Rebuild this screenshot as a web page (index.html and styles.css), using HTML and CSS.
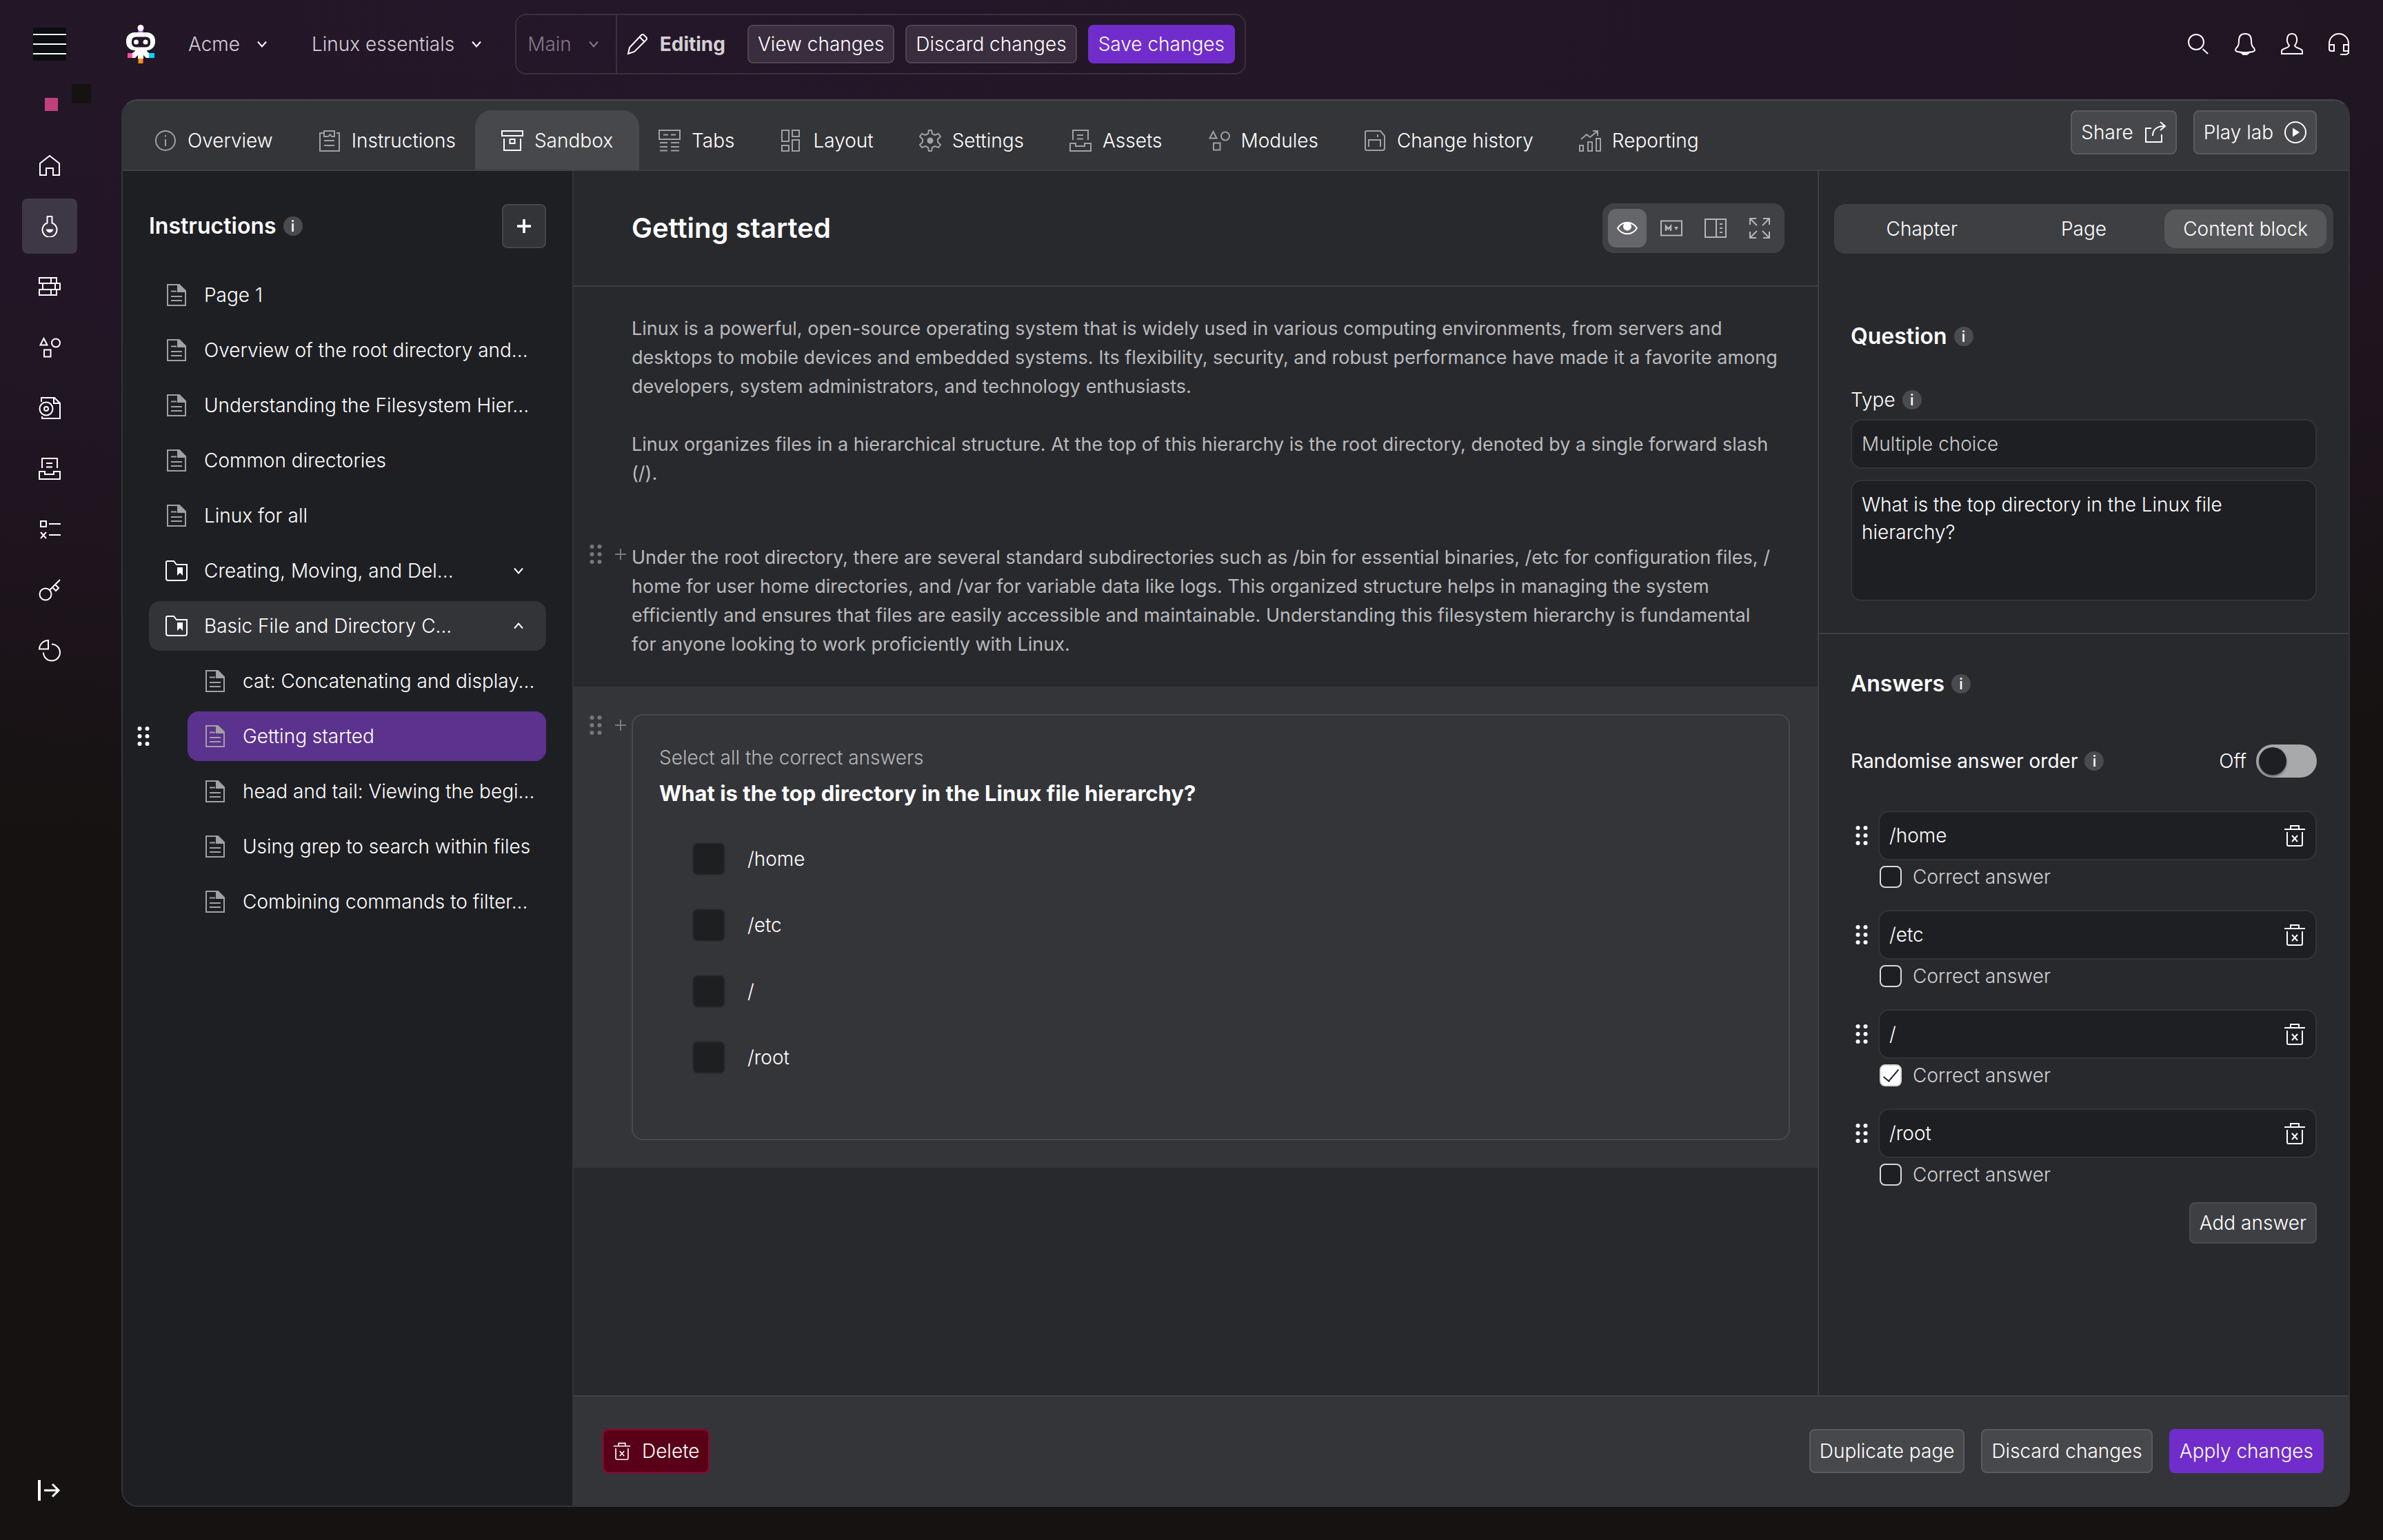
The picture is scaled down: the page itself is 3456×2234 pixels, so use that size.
FILE: index.html
```
<!DOCTYPE html>
<html lang="en">
<head>
<meta charset="utf-8">
<title>Linux essentials – Getting started</title>
<link rel="stylesheet" href="styles.css">
</head>
<body>
<svg class="sprite" aria-hidden="true">
  <symbol id="chevron" viewBox="0 0 16 16"><path d="M2 4.500l6 7 6-7"/></symbol>
  <symbol id="chevron-up" viewBox="0 0 16 16"><path d="M2 11.500l6-7 6 7"/></symbol>
  <symbol id="dots" viewBox="0 0 20 32"><g fill="currentColor" stroke="none"><circle cx="4.500" cy="5" r="3"/><circle cx="15.500" cy="5" r="3"/><circle cx="4.500" cy="16" r="3"/><circle cx="15.500" cy="16" r="3"/><circle cx="4.500" cy="27" r="3"/><circle cx="15.500" cy="27" r="3"/></g></symbol>
  <symbol id="plus" viewBox="0 0 16 16"><path d="M8 0v16M0 8h16"/></symbol>
  <symbol id="home" viewBox="0 0 32 32"><path d="M2 30V13L16 2l14 11v17h-9V20H11v10z"/></symbol>
  <symbol id="flask" viewBox="0 0 32 32"><path d="M12 2h8M12.500 2v9.500a10.500 10.500 0 1 0 7 0V2"/><path d="M11 20.500h10a5 5 0 0 1-10 0z" fill="currentColor" stroke="none"/></symbol>
  <symbol id="bricks" viewBox="0 0 32 32"><path d="M1 3h25v8H1zM18 3v8M6 11h25v9H6zM24 11v9M1 20h25v8H1zM18 20v8"/></symbol>
  <symbol id="shapes" viewBox="0 0 32 32"><path d="M7.500 3L2.500 12.500h10zM8 19.500h9.500v10H8z"/><circle cx="25" cy="9.500" r="6"/></symbol>
  <symbol id="disc-page" viewBox="0 0 32 32"><path d="M4 7V1h19l8 8v22H5v-3M22 1v8h8"/><circle cx="11" cy="17" r="9.500"/><circle cx="11" cy="17" r="3"/></symbol>
  <symbol id="tray" viewBox="0 0 32 32"><path d="M5 15V1h22v14M11 8h9M11 13.500h9M1 20h8v4h13v-4h9v11H1z"/></symbol>
  <symbol id="checklist" viewBox="0 0 32 32"><path d="M3 4h8v8H3zM15 8h17M15 24h17M3 20l8 9M11 20l-8 9"/></symbol>
  <symbol id="key" viewBox="0 0 32 32"><circle cx="10" cy="22" r="8.500"/><path d="M16 16L31 1M24 8l5 5-4 4-5-5"/></symbol>
  <symbol id="pie" viewBox="0 0 32 32"><path d="M14 1v12.500H1A13 13 0 0 1 14 1zM19 6.500a12 12 0 1 1-12 12"/></symbol>
  <symbol id="exit" viewBox="0 0 36 36"><path d="M3 3v30" stroke-width="4"/><path d="M10 18h21M22 9l9 9-9 9" stroke-width="3"/></symbol>
  <symbol id="pencil" viewBox="0 0 32 32"><path d="M2 30l2-9L21 3q2-2 4 0l3 3q2 2 0 4L11 27zM19 6l7 7"/></symbol>
  <symbol id="search" viewBox="0 0 32 32"><circle cx="13" cy="13" r="11"/><path d="M22.500 23l7.500 7"/></symbol>
  <symbol id="bell" viewBox="0 0 32 32"><path d="M16 1C9 1 7 6 7 11c0 6-1 8-4 11-2 3-1 4 2 5 7 1.500 15 1.500 22 0 3-1 4-2 2-5-3-3-4-5-4-11 0-5-2-10-9-10z"/><path d="M11 29h10l-3 2.500h-4z" fill="currentColor"/></symbol>
  <symbol id="user" viewBox="0 0 32 32"><path d="M12 18C7 12 8 1 16 1s9 11 4 17c0 4 11 4 11 8v4H1v-4c0-4 11-4 11-8z"/></symbol>
  <symbol id="headset" viewBox="0 0 32 32"><path d="M2 24V15a14 14 0 0 1 28 0v14l-3 2h-9M2 17h7v9H5q-3 0-3-3M30 17h-7v9h7"/></symbol>
  <symbol id="info" viewBox="0 0 32 32"><circle cx="16" cy="16" r="14"/><path d="M16 14v10M16 8v2.500"/></symbol>
  <symbol id="clipboard" viewBox="0 0 32 32"><path d="M7 5H2v26h28V5h-4M8 2h15v8h-4l-2-3-3 3H8zM8 16h15M8 23h15"/></symbol>
  <symbol id="archive" viewBox="0 0 32 32"><path d="M1 2h30v7H1zM4 13v17h24V13M12.500 14h7v6h-7z"/></symbol>
  <symbol id="tabs" viewBox="0 0 32 32"><path d="M1 1h30v13H1zM7 7.500h7M18 7.500h7M2 19h11M18 19h12M2 25h11M18 25h12M2 30.500h11M18 30.500h12"/></symbol>
  <symbol id="layout" viewBox="0 0 32 32"><path d="M3 1h10v16H3zM18 1h10v9H18zM3 23h10v8H3zM18 15h10v16H18z"/></symbol>
  <symbol id="gear" viewBox="0 0 32 32"><path d="M13 6l1-5h4l1 5 4 2 5-2 3 4-4 4v4l4 4-3 4-5-2-4 2-1 5h-4l-1-5-4-2-5 2-3-4 4-4v-4l-4-4 3-4 5 2z"/><circle cx="16" cy="16" r="3.500" fill="currentColor"/></symbol>
  <symbol id="floppy" viewBox="0 0 32 32"><path d="M4 2h20l6 7v18q0 3-3 3H4q-2 0-2-2V4q0-2 2-2zM7 25V15h17v10M20 7v4"/></symbol>
  <symbol id="chart" viewBox="0 0 32 32"><path d="M1 23h5v8H1zM13 18h6v13h-6zM25 13h6v18h-6zM3 14l8-7 5 4 11-9M20 2h7v7"/></symbol>
  <symbol id="share" viewBox="0 0 32 32"><path d="M10 10H2v20h23V19M12 21c0-8 5-14 17-14M23 1l7 6-7 6"/></symbol>
  <symbol id="play" viewBox="0 0 32 32"><circle cx="16" cy="16" r="15"/><path d="M12 9.500l10 6.500-10 6.500z" fill="currentColor" stroke="none"/></symbol>
  <symbol id="page" viewBox="0 0 32 32"><path d="M3 1h17l9 9v21H3zM8 10.500h8M8 18h16M8 24h16"/><path d="M18 1v10h10z" fill="currentColor"/></symbol>
  <symbol id="folder" viewBox="0 0 32 32"><path d="M3 2h9l4 5h15v20q0 3-3 3H4q-3 0-3-3V4q0-2 2-2z"/><path d="M17 11h8v12l-4-4-4 4z" fill="currentColor" stroke="none"/></symbol>
  <symbol id="eye" viewBox="0 0 32 32"><path d="M2 16C9 5 23 5 30 16 23 27 9 27 2 16z"/><circle cx="16" cy="13.500" r="6" fill="currentColor" stroke="none"/></symbol>
  <symbol id="markdown" viewBox="0 0 32 32"><path d="M1 5.500h30v21H1z"/><path d="M8 20v-7l3.500 4 3.500-4v7" stroke-width="2.500"/><path d="M20 14h6l-3 5z" fill="currentColor" stroke="none"/></symbol>
  <symbol id="split" viewBox="0 0 32 32"><path d="M1 3h30v26H1zM17 3v26M22 10h4M22 16h4M22 22h4"/></symbol>
  <symbol id="expand" viewBox="0 0 32 32"><path d="M2 11V2h9M2 2l10 10M21 2h9v9M30 2L20 12M2 21v9h9M2 30l10-10M21 30h9v-9M30 30L20 20"/></symbol>
  <symbol id="trash" viewBox="0 0 32 32"><path d="M1 7h30M10 7V2h12v5M5 11v18q0 2 2 2h18q2 0 2-2V11M12 16l8 9M20 16l-8 9"/></symbol>
</svg>

<div class="app">
  <nav class="rail" aria-label="Main">
    <button class="menu" aria-label="Menu"><span></span><span></span><span></span></button>
    <span class="deco deco-dark"></span><span class="deco deco-pink"></span>
    <div class="rail-links">
      <a href="#" aria-label="Home"><svg class="icon"><use href="#home"/></svg></a>
      <a href="#" aria-label="Labs" class="active"><svg class="icon"><use href="#flask"/></svg></a>
      <a href="#" aria-label="Collections"><svg class="icon"><use href="#bricks"/></svg></a>
      <a href="#" aria-label="Modules"><svg class="icon"><use href="#shapes"/></svg></a>
      <a href="#" aria-label="Images"><svg class="icon"><use href="#disc-page"/></svg></a>
      <a href="#" aria-label="Assets"><svg class="icon"><use href="#tray"/></svg></a>
      <a href="#" aria-label="Checks"><svg class="icon"><use href="#checklist"/></svg></a>
      <a href="#" aria-label="Keys"><svg class="icon"><use href="#key"/></svg></a>
      <a href="#" aria-label="Reports"><svg class="icon"><use href="#pie"/></svg></a>
    </div>
    <button class="rail-exit" aria-label="Expand"><svg><use href="#exit"/></svg></button>
  </nav>

  <header class="topbar">
    <svg class="logo" viewBox="0 0 42 56" aria-label="Home" role="img">
      <rect x="17.500" y="7" width="7" height="6" fill="#b36bff"/>
      <rect x="2" y="41" width="9" height="7" fill="#ff4fa3"/>
      <rect x="32" y="41" width="9" height="7" fill="#00d8ff"/>
      <rect x="17.500" y="48" width="7" height="8" fill="#ff8f1f"/>
      <circle cx="21" cy="4.500" r="4.500" fill="#fff"/>
      <rect y="11" width="42" height="26" rx="12" fill="#fff"/>
      <path d="M12 35h18v3l3 3v7h-4l-4-4v5h-8v-5l-4 4h-4v-7l4-3z" fill="#fff"/>
      <rect x="8" y="17.500" width="27" height="15" rx="6" fill="#231728"/>
      <circle cx="14.500" cy="25" r="3.500" fill="#fff"/><circle cx="28" cy="25" r="3.500" fill="#fff"/>
    </svg>
    <button class="crumb">Acme <svg class="chev"><use href="#chevron"/></svg></button>
    <button class="crumb">Linux essentials <svg class="chev"><use href="#chevron"/></svg></button>
    <div class="branch">
      <button class="crumb branch-name">Main <svg class="chev"><use href="#chevron"/></svg></button>
      <div class="branch-state">
        <svg class="icon"><use href="#pencil"/></svg><strong>Editing</strong>
        <button class="btn btn-small">View changes</button>
        <button class="btn btn-small">Discard changes</button>
        <button class="btn btn-small btn-primary">Save changes</button>
      </div>
    </div>
    <div class="tools">
      <button aria-label="Search"><svg class="icon"><use href="#search"/></svg></button>
      <button aria-label="Notifications"><svg class="icon"><use href="#bell"/></svg></button>
      <button aria-label="Account"><svg class="icon"><use href="#user"/></svg></button>
      <button aria-label="Support"><svg class="icon"><use href="#headset"/></svg></button>
    </div>
  </header>

  <main class="panel">
    <header class="panel-head">
      <nav class="tabs" aria-label="Lab">
        <a href="#"><svg class="icon"><use href="#info"/></svg>Overview</a>
        <a href="#"><svg class="icon"><use href="#clipboard"/></svg>Instructions</a>
        <a href="#" class="active"><svg class="icon"><use href="#archive"/></svg>Sandbox</a>
        <a href="#"><svg class="icon"><use href="#tabs"/></svg>Tabs</a>
        <a href="#"><svg class="icon"><use href="#layout"/></svg>Layout</a>
        <a href="#"><svg class="icon"><use href="#gear"/></svg>Settings</a>
        <a href="#"><svg class="icon"><use href="#tray"/></svg>Assets</a>
        <a href="#"><svg class="icon"><use href="#shapes"/></svg>Modules</a>
        <a href="#"><svg class="icon"><use href="#floppy"/></svg>Change history</a>
        <a href="#"><svg class="icon"><use href="#chart"/></svg>Reporting</a>
      </nav>
      <div class="head-actions">
        <button class="btn">Share <svg class="icon"><use href="#share"/></svg></button>
        <button class="btn">Play lab <svg class="icon"><use href="#play"/></svg></button>
      </div>
    </header>

    <aside class="outline">
      <div class="outline-head">
        <h2 class="heading">Instructions <span class="hint">i</span></h2>
        <button class="btn btn-add" aria-label="Add page"><svg><use href="#plus"/></svg></button>
      </div>
      <ul class="pages">
        <li><a href="#"><svg class="icon"><use href="#page"/></svg>Page 1</a></li>
        <li><a href="#"><svg class="icon"><use href="#page"/></svg>Overview of the root directory and...</a></li>
        <li><a href="#"><svg class="icon"><use href="#page"/></svg>Understanding the Filesystem Hier...</a></li>
        <li><a href="#"><svg class="icon"><use href="#page"/></svg>Common directories</a></li>
        <li><a href="#"><svg class="icon"><use href="#page"/></svg>Linux for all</a></li>
        <li><a href="#" class="folder"><svg class="icon"><use href="#folder"/></svg>Creating, Moving, and Del...<svg class="chev"><use href="#chevron"/></svg></a></li>
        <li><a href="#" class="folder open"><svg class="icon"><use href="#folder"/></svg>Basic File and Directory C...<svg class="chev"><use href="#chevron-up"/></svg></a>
          <ul class="pages nested">
            <li><a href="#"><svg class="icon"><use href="#page"/></svg>cat: Concatenating and display...</a></li>
            <li class="current"><svg class="grip"><use href="#dots"/></svg><a href="#" aria-current="page"><svg class="icon"><use href="#page"/></svg>Getting started</a></li>
            <li><a href="#"><svg class="icon"><use href="#page"/></svg>head and tail: Viewing the begi...</a></li>
            <li><a href="#"><svg class="icon"><use href="#page"/></svg>Using grep to search within files</a></li>
            <li><a href="#"><svg class="icon"><use href="#page"/></svg>Combining commands to filter...</a></li>
          </ul>
        </li>
      </ul>
    </aside>

    <section class="editor">
      <header class="editor-head">
        <h1>Getting started</h1>
        <div class="views">
          <button class="active" aria-label="Preview"><svg class="icon"><use href="#eye"/></svg></button>
          <button aria-label="Markdown"><svg class="icon"><use href="#markdown"/></svg></button>
          <button aria-label="Split view"><svg class="icon"><use href="#split"/></svg></button>
          <button aria-label="Full screen"><svg class="icon"><use href="#expand"/></svg></button>
        </div>
      </header>
      <div class="block">
        <div class="gutter"></div>
        <div class="prose">
          <p>Linux is a powerful, open-source operating system that is widely used in various computing environments, from servers and<br>desktops to mobile devices and embedded systems. Its flexibility, security, and robust performance have made it a favorite among<br>developers, system administrators, and technology enthusiasts.</p>
          <p>Linux organizes files in a hierarchical structure. At the top of this hierarchy is the root directory, denoted by a single forward slash<br>(/).</p>
        </div>
      </div>
      <div class="block">
        <div class="gutter"><svg class="grip"><use href="#dots"/></svg><svg class="add"><use href="#plus"/></svg></div>
        <div class="prose">
          <p>Under the root directory, there are several standard subdirectories such as /bin for essential binaries, /etc for configuration files, /<br>home for user home directories, and /var for variable data like logs. This organized structure helps in managing the system<br>efficiently and ensures that files are easily accessible and maintainable. Understanding this filesystem hierarchy is fundamental<br>for anyone looking to work proficiently with Linux.</p>
        </div>
      </div>
      <div class="block selected">
        <div class="gutter"><svg class="grip"><use href="#dots"/></svg><svg class="add"><use href="#plus"/></svg></div>
        <fieldset class="quiz">
          <p class="quiz-note">Select all the correct answers</p>
          <h3>What is the top directory in the Linux file hierarchy?</h3>
          <div class="options">
            <label><input type="checkbox">/home</label>
            <label><input type="checkbox">/etc</label>
            <label><input type="checkbox">/</label>
            <label><input type="checkbox">/root</label>
          </div>
        </fieldset>
      </div>
    </section>

    <aside class="inspector">
      <div class="segments">
        <button>Chapter</button><button>Page</button><button class="active">Content block</button>
      </div>
      <section class="question">
        <h2 class="heading">Question <span class="hint">i</span></h2>
        <div class="field-label"><label for="type">Type</label> <span class="hint">i</span></div>
        <select id="type" class="field muted"><option>Multiple choice</option></select>
        <textarea class="field" aria-label="Question text">What is the top directory in the Linux file hierarchy?</textarea>
      </section>
      <section class="answers">
        <h2 class="heading">Answers <span class="hint">i</span></h2>
        <div class="random">
          <label for="random">Randomise answer order</label> <span class="hint">i</span>
          <span class="random-state">Off</span><input id="random" type="checkbox" class="switch">
        </div>
        <div class="answer-list">
          <div class="answer"><svg class="grip"><use href="#dots"/></svg>
            <div class="answer-field"><input type="text" value="/home" aria-label="Answer 1"><button aria-label="Remove answer 1"><svg class="icon"><use href="#trash"/></svg></button></div>
            <label class="correct"><input type="checkbox">Correct answer</label></div>
          <div class="answer"><svg class="grip"><use href="#dots"/></svg>
            <div class="answer-field"><input type="text" value="/etc" aria-label="Answer 2"><button aria-label="Remove answer 2"><svg class="icon"><use href="#trash"/></svg></button></div>
            <label class="correct"><input type="checkbox">Correct answer</label></div>
          <div class="answer"><svg class="grip"><use href="#dots"/></svg>
            <div class="answer-field"><input type="text" value="/" aria-label="Answer 3"><button aria-label="Remove answer 3"><svg class="icon"><use href="#trash"/></svg></button></div>
            <label class="correct"><input type="checkbox" checked>Correct answer</label></div>
          <div class="answer"><svg class="grip"><use href="#dots"/></svg>
            <div class="answer-field"><input type="text" value="/root" aria-label="Answer 4"><button aria-label="Remove answer 4"><svg class="icon"><use href="#trash"/></svg></button></div>
            <label class="correct"><input type="checkbox">Correct answer</label></div>
        </div>
        <button class="btn btn-new">Add answer</button>
      </section>
    </aside>

    <footer class="panel-foot">
      <button class="btn btn-danger"><svg><use href="#trash"/></svg>Delete</button>
      <div class="foot-actions">
        <button class="btn">Duplicate page</button>
        <button class="btn">Discard changes</button>
        <button class="btn btn-primary">Apply changes</button>
      </div>
    </footer>
  </main>
</div>
</body>
</html>
```
FILE: styles.css
```
*, *::before, *::after { box-sizing: border-box; }

body {
  margin: 0;
  color: #fff;
  font: 300 28px/40px Inter, "Liberation Sans", sans-serif;
  background: #151211 radial-gradient(ellipse 130% 55% at 30% 0, #241729 0%, #221626 40%, #1c141b 75%, #151211 100%) no-repeat;
}

h1, h2, h3, p, ul, fieldset { margin: 0; padding: 0; }
ul { list-style: none; }
a { color: inherit; text-decoration: none; }
button, input, select, textarea { font: inherit; color: inherit; }
button { padding: 0; border: 0; background: none; white-space: nowrap; }
svg { display: block; flex: none; fill: none; stroke: currentColor; stroke-width: 2; }

.sprite { position: absolute; width: 0; height: 0; }
.icon { width: 32px; height: 32px; }
.chev { width: 16px; height: 16px; }
.grip { width: 20px; height: 32px; }

.app {
  display: grid;
  grid-template-columns: 176px minmax(0, 1fr);
  grid-template-rows: 144px 1fr;
  min-height: 100vh;
  padding: 0 48px 48px 0;
}

/* Left rail */
.rail {
  position: relative;
  grid-row: 1 / 3;
  display: flex;
  flex-direction: column;
  padding: 40px 0 0 32px;
}
.menu {
  display: flex;
  flex-direction: column;
  justify-content: space-between;
  width: 48px;
  height: 48px;
  margin: 0 0 112px 16px;
  padding: 9px 0;
  background: #0b0d10;
}
.menu span { height: 2px; background: #fff; }
.deco { position: absolute; }
.deco-dark { left: 104px; top: 122px; width: 28px; height: 28px; background: #151211; }
.deco-pink { left: 65px; top: 142px; width: 19px; height: 19px; background: #c0407f; }
.rail-links { display: flex; flex-direction: column; gap: 8px; }
.rail-links a {
  display: grid;
  place-items: center;
  width: 80px;
  height: 80px;
  border-radius: 8px;
}
.rail-links .active { background: #3e3846; }
.rail-exit { width: 48px; height: 48px; margin: auto 0 0 16px; padding: 6px; }
.rail-exit svg { width: 36px; height: 36px; }

/* Top bar */
.topbar { display: flex; align-items: center; height: 128px; color: #d3d0d4; }
.logo { width: 42px; height: 56px; margin: 0 48px 0 7px; stroke: none; }
.crumb { display: flex; align-items: center; gap: 24px; margin-right: 64px; }
.crumb svg { color: #fff; }
.branch {
  display: flex;
  align-items: stretch;
  height: 88px;
  margin-left: -16px;
  border: 2px solid #3a2e3f;
  border-radius: 16px;
}
.branch-name {
  margin: 0;
  padding: 0 24px 0 16px;
  border-right: 2px solid #3a2e3f;
  color: #837a86;
}
.branch-name svg { color: inherit; }
.branch-state { display: flex; align-items: center; gap: 16px; padding: 0 14px; color: #fff; }
.branch-state strong { margin-right: 16px; color: #d3d0d4; font-weight: 700; }
.tools { display: flex; gap: 36px; margin-left: auto; color: #fff; }

/* Buttons */
.btn {
  display: inline-flex;
  align-items: center;
  justify-content: center;
  gap: 16px;
  height: 64px;
  padding: 0 13px;
  border: 2px solid #5a5b5e;
  border-radius: 8px;
  background: #47484b;
  color: #fff;
}
.btn-small { height: 56px; border-color: #4e4453; background: #392d3e; }
.btn-primary { border-color: #702dcb; background: #702dcb; }
.btn-danger { border-color: #94002f; background: #590017; }
.btn-danger svg { width: 26px; height: 26px; }

/* Panel */
.panel {
  display: grid;
  grid-template-columns: 654px minmax(0, 1fr) 770px;
  grid-template-rows: 102px 1fr 160px;
  overflow: hidden;
  border: 2px solid #343539;
  border-top-color: #47484b;
  border-radius: 24px;
  background: #28292d;
}
.panel-head {
  grid-column: 1 / -1;
  display: flex;
  justify-content: space-between;
  align-items: flex-start;
  padding: 14px 46px 0 13px;
  border-bottom: 2px solid #404145;
  background: #343539;
}
.tabs { display: flex; }
.tabs a {
  display: flex;
  align-items: center;
  gap: 16px;
  height: 86px;
  padding: 2px 33px 0;
  border-radius: 24px 24px 0 0;
  white-space: nowrap;
}
.tabs .icon { color: #a0a1a3; }
.tabs .active { margin: 0 -5px; padding: 2px 38px 0; background: #47484b; }
.tabs .active .icon { color: #fff; }
.head-actions { display: flex; gap: 24px; }

.heading { display: flex; align-items: center; gap: 10px; font-size: 32px; font-weight: 600; }
.hint {
  display: inline-grid;
  place-items: center;
  width: 28px;
  height: 28px;
  border-radius: 50%;
  background: #4a4b4e;
  font-size: 22px;
  font-weight: 500;
  line-height: 28px;
}

/* Page outline */
.outline { grid-row: 2 / 4; padding: 48px 38px; border-right: 2px solid #333438; background: #1e1f23; }
.outline-head { display: flex; justify-content: space-between; align-items: center; margin-bottom: 32px; }
.btn-add { width: 64px; border-color: #45464a; background: #333438; }
.btn-add svg { width: 20px; height: 20px; stroke-width: 3; stroke-linecap: round; overflow: visible; }
.pages { display: grid; grid-template-columns: minmax(0, 1fr); gap: 8px; }
.pages a {
  display: flex;
  align-items: center;
  gap: 24px;
  height: 72px;
  padding: 0 24px;
  border-radius: 16px;
  white-space: nowrap;
}
.pages .icon { color: #a0a1a3; }
.pages .folder .icon { color: #fff; }
.pages .folder { padding-right: 32px; }
.pages .folder .chev { margin-left: auto; }
.pages .open { background: #333438; }
.nested { margin: 8px 0 0 56px; }
.current { position: relative; }
.current a { background: #5b328e; }
.current .grip { position: absolute; left: -74px; top: 20px; }

/* Editor */
.editor-head {
  display: flex;
  justify-content: space-between;
  align-items: center;
  height: 168px;
  padding: 0 48px 0 84px;
  border-bottom: 2px solid #3e3f43;
}
h1 { font-size: 40px; line-height: 48px; font-weight: 600; }
.views { display: flex; gap: 8px; padding: 8px; border-radius: 16px; background: #404144; }
.views button { display: grid; place-items: center; width: 56px; height: 56px; border-radius: 12px; color: #b4b5b7; }
.views .active { background: #656669; color: #fff; }
.block { display: grid; grid-template-columns: 84px minmax(0, 1fr); padding: 40px 40px 40px 0; }
.selected { background: #343539; }
.gutter { display: flex; gap: 18px; padding-left: 22px; color: #77787b; }
.gutter .add { width: 16px; height: 32px; }
.prose { display: grid; gap: 42px; color: #b9babc; font-size: 27px; font-weight: 400; line-height: 42px; white-space: nowrap; }
.quiz { min-width: 0; padding: 40px 38px 94px; border: 2px solid #48494c; border-radius: 16px; }
.quiz-note { color: #b4b5b8; line-height: 42px; }
.quiz h3 { margin-top: 10px; font-size: 31px; line-height: 42px; font-weight: 700; }
.options { display: grid; gap: 48px; margin: 50px 0 0 48px; }
.options label { display: flex; align-items: center; gap: 32px; height: 48px; }
.options input {
  appearance: none;
  width: 48px;
  height: 48px;
  margin: 0;
  border: 2px solid #2b2c2f;
  border-radius: 8px;
  background: #1e1f21;
}

/* Inspector */
.inspector { border-left: 2px solid #3e3f43; }
.segments {
  display: grid;
  grid-template-columns: repeat(3, 1fr);
  margin: 48px 22px 100px;
  padding: 8px 10px;
  border-radius: 16px;
  background: #3e3f43;
}
.segments button { height: 56px; border-radius: 16px; }
.segments .active { background: #565759; }
.question { display: flex; flex-direction: column; padding: 0 46px 46px; border-bottom: 2px solid #3e3f43; }
.field-label { display: flex; align-items: center; gap: 10px; margin: 52px 0 8px; }
.field {
  appearance: none;
  display: block;
  width: 100%;
  height: 72px;
  padding: 0 14px;
  border: 2px solid #333438;
  border-radius: 16px;
  background: #1e1f23;
}
.muted { color: #cbcccd; }
textarea.field { height: 176px; margin-top: 16px; padding: 14px; resize: none; }
.answers { display: flex; flex-direction: column; padding: 52px 46px; }
.random { display: flex; align-items: center; gap: 10px; margin: 68px 0 48px; font-weight: 400; }
.random-state { margin-left: auto; font-weight: 300; }
.switch {
  appearance: none;
  display: flex;
  align-items: center;
  width: 88px;
  height: 48px;
  margin: 0 0 0 4px;
  padding: 4px;
  border-radius: 24px;
  background: #a8a9ab;
}
.switch::before { content: ""; width: 40px; height: 40px; border-radius: 50%; background: #1e1f23; box-shadow: 0 2px 3px #1e1f2399; }
.answer-list { display: grid; gap: 32px; }
.answer { display: grid; grid-template-columns: 40px minmax(0, 1fr); row-gap: 8px; align-items: center; }
.answer .grip { margin-left: 6px; }
.answer-field {
  display: flex;
  align-items: center;
  height: 72px;
  padding: 0 14px;
  border: 2px solid #333438;
  border-radius: 16px;
  background: #1e1f23;
}
.answer-field input { flex: 1; min-width: 0; padding: 0; border: 0; background: none; }
.correct { grid-column: 2; display: flex; align-items: center; gap: 16px; height: 32px; padding-left: 2px; color: #d0d1d2; }
.correct input {
  appearance: none;
  display: grid;
  place-items: center;
  width: 32px;
  height: 32px;
  margin: 0;
  border: 2px solid #d8d9da;
  border-radius: 8px;
  background: #1e1f23;
}
.correct input:checked { background: #fff; }
.correct input:checked::before {
  content: "";
  width: 11px;
  height: 23px;
  margin-bottom: 6px;
  border: solid #1e1f23;
  border-width: 0 2px 2px 0;
  transform: rotate(40deg);
}
.btn-new { align-self: flex-end; height: 60px; margin-top: 24px; border-color: #4a4b4f; background: #3e3f43; }

/* Footer */
.panel-foot {
  grid-column: 2 / 4;
  display: flex;
  justify-content: space-between;
  align-items: center;
  padding: 0 36px 0 42px;
  border-top: 2px solid #404145;
  background: #343539;
}
.foot-actions { display: flex; gap: 24px; }
```
